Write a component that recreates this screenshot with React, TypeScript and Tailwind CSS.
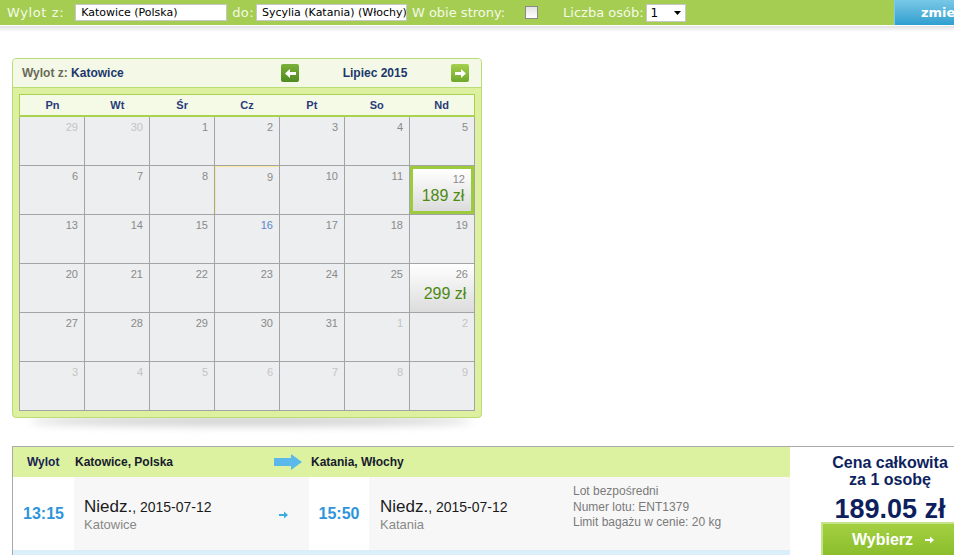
import { ReactNode } from "react";

type Day = { n: number; muted?: boolean; price?: string; selected?: boolean; today?: boolean; hover?: boolean };

const weeks: Day[][] = [
  [{ n: 29, muted: true }, { n: 30, muted: true }, { n: 1 }, { n: 2 }, { n: 3 }, { n: 4 }, { n: 5 }],
  [{ n: 6 }, { n: 7 }, { n: 8 }, { n: 9, hover: true }, { n: 10 }, { n: 11 }, { n: 12, price: "189 zł", selected: true }],
  [{ n: 13 }, { n: 14 }, { n: 15 }, { n: 16, today: true }, { n: 17 }, { n: 18 }, { n: 19 }],
  [{ n: 20 }, { n: 21 }, { n: 22 }, { n: 23 }, { n: 24 }, { n: 25 }, { n: 26, price: "299 zł" }],
  [{ n: 27 }, { n: 28 }, { n: 29 }, { n: 30 }, { n: 31 }, { n: 1, muted: true }, { n: 2, muted: true }],
  [{ n: 3, muted: true }, { n: 4, muted: true }, { n: 5, muted: true }, { n: 6, muted: true }, { n: 7, muted: true }, { n: 8, muted: true }, { n: 9, muted: true }],
];

const dayNames = ["Pn", "Wt", "Śr", "Cz", "Pt", "So", "Nd"];

function NavButton({ dir, light }: { dir: "left" | "right"; light?: boolean }) {
  return (
    <button
      className={`w-[18px] h-[18px] rounded-[2px] flex items-center justify-center ${
        light ? "bg-gradient-to-b from-[#a6d04c] to-[#6fa82a]" : "bg-gradient-to-b from-[#7cb23a] to-[#4f8a20]"
      }`}
    >
      <svg width="11" height="9" viewBox="0 0 11 9" className={dir === "left" ? "rotate-180" : ""}>
        <path d="M0 3h6V0l5 4.5L6 9V6H0z" fill="#fff" />
      </svg>
    </button>
  );
}

function Cell({ d }: { d: Day }) {
  let cls = "bg-[#eceef0]";
  if (d.price) cls = "bg-gradient-to-b from-[#ffffff] to-[#dcdcdc]";
  if (d.selected) cls += " border-[3px] border-[#9ccb3e]";
  if (d.hover) cls += " border-t border-l border-[#fbe9a0]";
  return (
    <div className={`h-12 relative flex flex-col items-end ${cls}`}>
      <span
        className={`text-[11px] leading-none pt-[5px] pr-[6px] ${
          d.muted ? "text-[#c4c4c4]" : d.today ? "text-[#5b86c4]" : "text-[#8a8a8a]"
        } ${d.selected ? "pt-[2px] pr-[3px]" : ""}`}
      >
        {d.n}
      </span>
      {d.price && (
        <span className={`self-center text-[16px] leading-none text-[#4c8a12] ${d.selected ? "mt-[3px] ml-[2px]" : "mt-[6px] ml-[6px]"}`}>
          {d.price}
        </span>
      )}
    </div>
  );
}

function Calendar() {
  return (
    <div className="ml-3 mt-[26px] w-[470px] relative">
      <div className="relative z-10 rounded-[4px] border border-[#b9dc74] bg-[#dcf0a0] overflow-hidden">
        <div className="h-[29px] bg-[#f4f9e7] border-b border-[#b9dc74] flex items-center text-[12px] font-bold">
          <span className="pl-[9px] w-[268px] text-[#6a6a58]">
            Wylot z: <span className="text-[#1c376b]">Katowice</span>
          </span>
          <NavButton dir="left" />
          <span className="w-[152px] text-center text-[#1c376b]">Lipiec 2015</span>
          <NavButton dir="right" light />
        </div>
        <div className="p-[6px] pb-[6px]">
          <div className="grid grid-cols-7 bg-[#f4fae6] border border-[#a9d24f] border-b-2 h-[23px] items-center text-[11px] font-bold text-[#2a3a7a]">
            {dayNames.map((n) => (
              <div key={n} className="text-center">
                {n}
              </div>
            ))}
          </div>
          <div className="grid grid-cols-7 gap-px bg-[#a4a4a4] border border-[#a4a4a4] border-t-0">
            {weeks.flat().map((d, i) => (
              <Cell key={i} d={d} />
            ))}
          </div>
        </div>
      </div>
      <div className="absolute left-[18px] right-[10px] -bottom-[8px] h-[10px] rounded-[50%] bg-[#cfcfcf] blur-[4px]" />
    </div>
  );
}

function Field({ children, w }: { children: ReactNode; w: string }) {
  return (
    <div className={`${w} h-[17px] bg-white border border-[#c7c7c7] text-[11px] text-black pl-[5px] leading-[15px] whitespace-nowrap overflow-hidden`}>
      {children}
    </div>
  );
}

function TopBar() {
  return (
    <div className="relative">
      <div className="h-[25px] bg-[#a5cd52] flex items-center text-[13px] text-[#f4f9e8] whitespace-nowrap" style={{ fontFamily: '"DejaVu Sans", Verdana, sans-serif' }}>
        <span className="ml-[7px] mr-[11px] tracking-[0.6px]">Wylot z:</span>
        <Field w="w-[152px]">Katowice (Polska)</Field>
        <span className="ml-[5px] mr-[2px] tracking-[0.4px]">do:</span>
        <Field w="w-[151px]">Sycylia (Katania) (Włochy)</Field>
        <span className="ml-[5px]">W obie strony:</span>
        <span className="ml-[20px] w-[13px] h-[13px] border border-[#8a8a8a] bg-gradient-to-b from-[#e4e4e4] to-[#ffffff]" />
        <span className="ml-[25px]">Liczba osób:</span>
        <div className="ml-[2px] w-[40px] h-[18px] bg-white border border-[#c7c7c7] flex items-center justify-between px-[4px] text-[12px] text-black">
          <span>1</span>
          <svg width="7" height="4" viewBox="0 0 7 4">
            <path d="M0 0h7L3.5 4z" fill="#000" />
          </svg>
        </div>
        <button className="ml-auto mr-[-40px] w-[100px] h-[25px] border-l border-[#7fcbe9] bg-gradient-to-b from-[#78c8e6] to-[#2c9fd0] text-white font-bold text-[13px] text-left pl-[26px]">
          zmień
        </button>
      </div>
      <div className="h-px bg-white" />
      <div className="h-[6px] bg-gradient-to-b from-[#e2e2e2] to-white" />
    </div>
  );
}

function Flight() {
  return (
    <div className="mt-[28px] ml-3 w-[1000px] border-t border-l border-[#a9a9a9] flex text-[#1b1b1b]">
      <div className="w-[777px] flex flex-col">
        <div className="h-[30px] bg-[#dcf2a0] flex items-center text-[12px] font-bold">
          <span className="w-[62px] pl-[14px] text-[#1a2452]">Wylot</span>
          <span className="w-[199px] text-[#171b2e]">Katowice, Polska</span>
          <svg width="28" height="16" viewBox="0 0 28 16" className="mr-[9px]">
            <path d="M0 4h17V0l11 8-11 8v-4H0z" fill="#5bb8ea" />
          </svg>
          <span className="text-[#171b2e]">Katania, Włochy</span>
        </div>
        <div className="h-[73px] flex">
          <div className="w-[61px] bg-white flex items-center justify-center text-[16px] font-bold text-[#2f94da]">13:15</div>
          <div className="w-[235px] bg-[#f7f7f7] flex items-center">
            <div className="pl-[10px] pt-[2px] w-[205px]">
              <div className="leading-[20px]">
                <span className="text-[17px]">Niedz.</span>
                <span className="text-[14px]">, 2015-07-12</span>
              </div>
              <div className="text-[13px] text-[#888] leading-[15px]">Katowice</div>
            </div>
            <svg width="9" height="8" viewBox="0 0 9 8" className="mt-[2px]">
              <path d="M0 3h5V0.5L9 4 5 7.5V5H0z" fill="#3aaee2" />
            </svg>
          </div>
          <div className="w-[60px] bg-white flex items-center justify-center text-[16px] font-bold text-[#2f94da]">15:50</div>
          <div className="flex-1 bg-[#f7f7f7] flex items-center">
            <div className="pl-[11px] pt-[2px] w-[204px]">
              <div className="leading-[20px]">
                <span className="text-[17px]">Niedz.</span>
                <span className="text-[14px]">, 2015-07-12</span>
              </div>
              <div className="text-[13px] text-[#888] leading-[15px]">Katania</div>
            </div>
            <div className="text-[12px] leading-[15.5px] text-[#7a7a7a] pb-[12px]">
              <div>Lot bezpośredni</div>
              <div>Numer lotu: ENT1379</div>
              <div>Limit bagażu w cenie: 20 kg</div>
            </div>
          </div>
        </div>
        <div className="h-[10px] bg-[#dbeffa]" />
      </div>
      <div className="w-[164px] bg-white flex flex-col items-center text-[#0e1f5e] font-bold">
        <div className="text-[16px] leading-[17px] mt-[7px] text-center pl-[36px] whitespace-nowrap">
          Cena całkowita
          <br />
          za 1 osobę
        </div>
        <div className="text-[27px] leading-[30px] mt-[6px] pl-[36px] whitespace-nowrap">189.05 zł</div>
        <button className="mt-[-2px] ml-[58px] w-[160px] h-[34px] border-l-2 border-t-2 border-[#c5e38a] bg-gradient-to-b from-[#a3d040] to-[#8abd2c] text-white text-[16px] font-bold text-left pl-[29px] flex items-center gap-[12px]">
          Wybierz
          <svg width="9" height="8" viewBox="0 0 9 8">
            <path d="M0 3h5V0.5L9 4 5 7.5V5H0z" fill="#fff" />
          </svg>
        </button>
      </div>
    </div>
  );
}

export default function App() {
  return (
    <div className="w-[954px] h-[555px] overflow-hidden bg-white" style={{ fontFamily: '"Liberation Sans", Arial, sans-serif' }}>
      <TopBar />
      <Calendar />
      <Flight />
    </div>
  );
}
